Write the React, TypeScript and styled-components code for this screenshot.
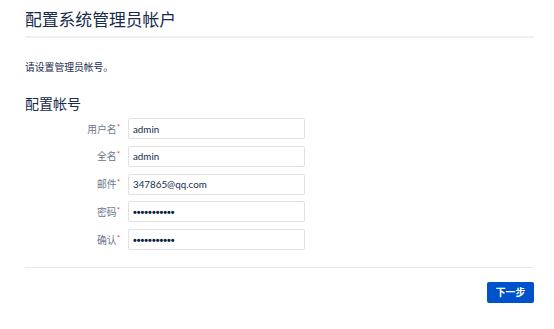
import React from "react";
import styled, { createGlobalStyle } from "styled-components";

const Global = createGlobalStyle`
  html, body { margin: 0; padding: 0; background: #ffffff; }
  body {
    font-family: Lato, "Noto Sans CJK SC", sans-serif;
    color: #172b4d;
  }
  * { box-sizing: border-box; }
`;

const Page = styled.div`
  padding: 7.5px 20px 0 25px;
  width: 554px;
`;

const Header = styled.header`
  padding-bottom: 4.5px;
  border-bottom: 2px solid #eff0f2;
`;

const Title = styled.h1`
  margin: 0;
  font-size: 16.8px;
  line-height: 24px;
  font-weight: 400;
  color: #172b4d;
`;

const Intro = styled.p`
  margin: 22px 0 0;
  font-size: 9.8px;
  line-height: 14px;
  color: #172b4d;
`;

const SectionTitle = styled.h2`
  margin: 20px 0 0;
  font-size: 14px;
  line-height: 20px;
  font-weight: 400;
  color: #172b4d;
`;

const Form = styled.form`
  margin-top: 4px;
  display: grid;
  grid-template-columns: 95px 177px;
  column-gap: 8px;
  row-gap: 6.75px;
  align-items: center;
`;

const Label = styled.label`
  justify-self: end;
  font-size: 9.8px;
  line-height: 14px;
  color: #6b778c;
  white-space: nowrap;
`;

const Required = styled.span`
  color: #de350b;
  font-size: 7px;
  vertical-align: top;
  position: relative;
  top: -2px;
  margin-left: 0.5px;
`;

const Input = styled.input<{ $masked?: boolean }>`
  width: 177px;
  height: 21px;
  margin: 0;
  padding: 0 4px;
  border: 1px solid #dfe1e6;
  border-radius: 2px;
  background: #ffffff;
  font-family: ${(p) =>
    p.$masked
      ? `"Liberation Sans", sans-serif`
      : `Lato, "Noto Sans CJK SC", sans-serif`};
  font-size: ${(p) => (p.$masked ? "10.8px" : "9.8px")};
  font-weight: ${(p) => (p.$masked ? 700 : 400)};
  color: ${(p) => (p.$masked ? "#091e42" : "#172b4d")};
  outline: none;
`;

const Footer = styled.div`
  margin-top: 17px;
  border-top: 1px solid #e8e9eb;
  padding-top: 14px;
  display: flex;
  justify-content: flex-end;
`;

const Button = styled.button`
  height: 21px;
  padding: 0 8.8px;
  border: none;
  border-radius: 2px;
  background: #0052cc;
  color: #ffffff;
  font-family: Lato, "Noto Sans CJK SC", sans-serif;
  font-size: 9.8px;
  font-weight: 700;
  line-height: 21px;
  cursor: pointer;
`;

const dots = "\u2022".repeat(11);

const fields = [
  { id: "username", label: "用户名", value: "admin", masked: false },
  { id: "fullname", label: "全名", value: "admin", masked: false },
  { id: "email", label: "邮件", value: "347865@qq.com", masked: false },
  { id: "password", label: "密码", value: dots, masked: true },
  { id: "confirm", label: "确认", value: dots, masked: true },
];

export default function App() {
  return (
    <>
      <Global />
      <Page>
        <Header>
          <Title>配置系统管理员帐户</Title>
        </Header>
        <Intro>请设置管理员帐号。</Intro>
        <SectionTitle>配置帐号</SectionTitle>
        <Form onSubmit={(e) => e.preventDefault()}>
          {fields.map((f) => (
            <React.Fragment key={f.id}>
              <Label htmlFor={f.id}>
                {f.label}
                <Required>*</Required>
              </Label>
              <Input id={f.id} type="text" $masked={f.masked} defaultValue={f.value} />
            </React.Fragment>
          ))}
        </Form>
        <Footer>
          <Button type="button">下一步</Button>
        </Footer>
      </Page>
    </>
  );
}
